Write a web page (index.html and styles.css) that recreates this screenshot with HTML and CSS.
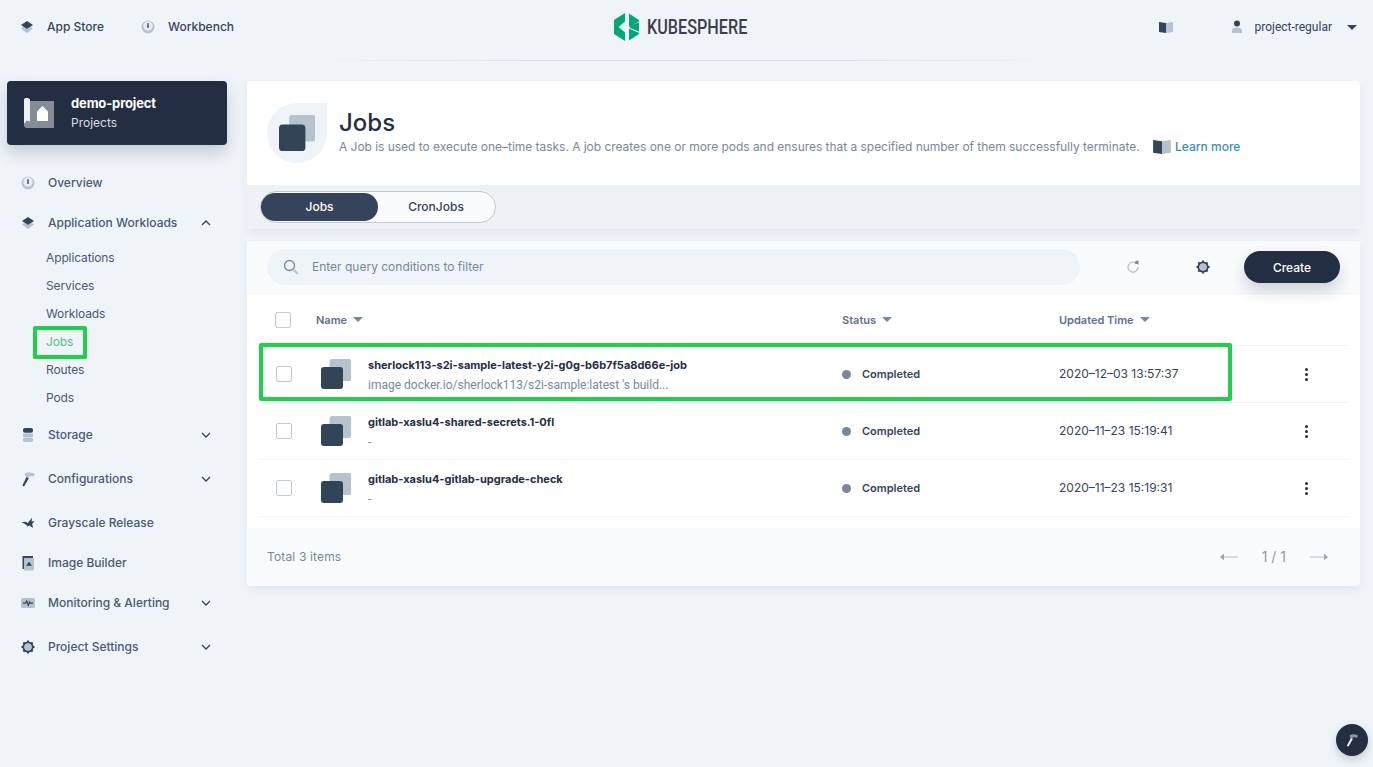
FILE: index.html
```html
<!DOCTYPE html>
<html lang="en" dir="ltr">

<head>
  <meta charset="utf-8">
  <meta name="viewport" content="width=device-width, initial-scale=1.0">
  <title>Jobs - KubeSphere</title>
  <link rel="stylesheet" href="styles.css">
</head>

<body>
  <svg class="sprite" aria-hidden="true">
    <symbol id="i-layers" viewBox="0 0 16 16">
      <path fill="#b6c2cd" d="M2 9.500 4.200 8 8 10.200 11.800 8 14 9.500 8 14z"/>
      <path fill="#36435c" d="M8 2 14 6 8 10 2 6z"/>
    </symbol>
    <symbol id="i-dial" viewBox="0 0 16 16">
      <circle cx="8" cy="8" r="6.500" fill="#b6c2cd"/>
      <circle cx="8" cy="7" r="4.700" fill="#e6ecf2"/>
      <path fill="#36435c" d="M7.500 4h1l.4 4.800H7.100z"/>
    </symbol>
    <symbol id="i-db" viewBox="0 0 16 16">
      <rect x="3" y="1" width="10" height="4.800" rx="2" fill="#36435c"/>
      <rect x="3" y="6.400" width="10" height="3.600" fill="#b6c2cd"/>
      <rect x="3" y="10.400" width="10" height="4.600" rx="2" fill="#b6c2cd"/>
    </symbol>
    <symbol id="i-hammer" viewBox="0 0 16 16">
      <path fill="#b6c2cd" d="M4.500 3C7.500 1 11.500 1.200 15 3l-1.200 2.800C12 4.800 10.500 4.800 9.200 5.600L8 7.200 5.800 5.800z"/>
      <path fill="#36435c" d="M6.500 6 8.800 7.300 4.400 15c-.5.700-2.100-.1-1.800-1z"/>
    </symbol>
    <symbol id="i-bird" viewBox="0 0 16 16">
      <path fill="#36435c" d="M1.500 7.200 6 6.800 7.500 8.300 12 2.800l-.4 3.700L14.500 6l-2.300 3 .8 4-3.500-2.500-2 1L6 9.500z"/>
    </symbol>
    <symbol id="i-builder" viewBox="0 0 16 16">
      <path fill="#36435c" d="M2.500 1h10.500v2H4.500v11h-2z"/>
      <rect x="4" y="3" width="10" height="12.500" rx="1" fill="#b6c2cd"/>
      <path fill="#36435c" d="M9 6.800 12 10.800H6z"/>
    </symbol>
    <symbol id="i-pulse" viewBox="0 0 16 16">
      <rect x="1" y="3" width="14" height="10" rx="1.500" fill="#b6c2cd"/>
      <path fill="none" stroke="#36435c" stroke-width="1.200" d="M3 8.200h2.500L6.800 6l1.500 4.200L9.600 7l.8 1.200H13"/>
    </symbol>
    <symbol id="i-gear" viewBox="0 0 16 16">
      <circle cx="8" cy="8" r="4.600" fill="none" stroke="#36435c" stroke-width="2"/>
      <circle cx="8" cy="8" r="3.600" fill="#b6c2cd"/>
      <path stroke="#36435c" stroke-width="2" d="M8 1.500v2.200M8 12.300v2.200M1.500 8h2.200M12.300 8h2.200M3.400 3.400l1.600 1.600M11 11l1.600 1.600M3.400 12.600 5 11M11 5l1.600-1.600"/>
    </symbol>
    <symbol id="i-book" viewBox="1 2.500 14 11">
      <path fill="#36435c" d="M1 2.500 8 3.500v10l-7-1z"/>
      <path fill="#b6c2cd" d="M8 3.500 15 2.500v10l-7 1z"/>
    </symbol>
    <symbol id="i-job" viewBox="0 0 30 30">
      <rect x="8.500" y="0" width="22" height="22" rx="2.500" fill="#b6c2cd"/>
      <rect x="0" y="8" width="22" height="22" rx="3" fill="#324558"/>
    </symbol>
    <symbol id="i-down" viewBox="0 0 12 12">
      <path fill="none" stroke="#36435c" stroke-width="1.300" d="M2 4l4 4 4-4"/>
    </symbol>
    <symbol id="i-up" viewBox="0 0 12 12">
      <path fill="none" stroke="#36435c" stroke-width="1.300" d="M2 8l4-4 4 4"/>
    </symbol>
  </svg>

  <header class="topbar">
    <nav class="topnav">
      <a class="toplink"><svg class="ico"><use href="#i-layers"/></svg>App Store</a>
      <a class="toplink"><svg class="ico"><use href="#i-dial"/></svg>Workbench</a>
    </nav>
    <div class="logo">
      <svg class="logo-mark" viewBox="0 0 25 28">
        <path fill="#00a971" d="M0 7 11 0v8.500L4.500 14 11 19.500V28L0 21z"/>
        <path fill="#00a971" d="M15 .500 25 7v1.500L15 14zM15 15.500 25 20v1L15 27.500z"/>
        <path fill="#00a971" d="M16 12 25 9.500v9L16 15z"/>
      </svg>
      <span class="logo-text"><span>KUBESPHERE</span></span>
    </div>
    <div class="topright">
      <svg class="ico-guide"><use href="#i-book"/></svg>
      <a class="user">
        <svg class="ico" viewBox="0 0 16 16">
          <circle cx="8" cy="4.500" r="3" fill="#36435c"/>
          <path fill="#b6c2cd" d="M3 14v-2.500C3 9.500 5 8.500 8 8.500s5 1 5 3V14z"/>
        </svg>
        <span>project-regular</span>
        <i class="caret"></i>
      </a>
    </div>
  </header>

  <div class="page">
    <aside class="sidebar">
      <div class="project">
        <svg class="project-ico" viewBox="0 0 30 30">
          <path fill="#fff" fill-opacity=".45" d="M0 3h30v27H3c-2 0-3-1-3-3z"/>
          <path fill="#eef1f4" d="M0 2c0-1.500 1-2 2.500-2S6 .500 6 2v21.500c-2-1-4-1-4-.500S0 27 0 25z"/>
          <path fill="#fff" d="M13 13.500 18.500 8l5.500 5.500V23H13z"/>
        </svg>
        <div>
          <div class="project-name">demo-project</div>
          <div class="project-type">Projects</div>
        </div>
      </div>
      <ul class="menu">
        <li class="menu-item"><svg class="ico"><use href="#i-dial"/></svg>Overview</li>
        <li class="menu-item"><svg class="ico"><use href="#i-layers"/></svg>Application Workloads<svg class="chev"><use href="#i-up"/></svg></li>
        <li class="submenu">
          <a>Applications</a>
          <a>Services</a>
          <a>Workloads</a>
          <a class="active">Jobs<span class="mark mark-jobs"></span></a>
          <a>Routes</a>
          <a>Pods</a>
        </li>
        <li class="menu-item has-sub"><svg class="ico"><use href="#i-db"/></svg>Storage<svg class="chev"><use href="#i-down"/></svg></li>
        <li class="menu-item has-sub"><svg class="ico"><use href="#i-hammer"/></svg>Configurations<svg class="chev"><use href="#i-down"/></svg></li>
        <li class="menu-item"><svg class="ico"><use href="#i-bird"/></svg>Grayscale Release</li>
        <li class="menu-item"><svg class="ico"><use href="#i-builder"/></svg>Image Builder</li>
        <li class="menu-item has-sub"><svg class="ico"><use href="#i-pulse"/></svg>Monitoring &amp; Alerting<svg class="chev"><use href="#i-down"/></svg></li>
        <li class="menu-item"><svg class="ico"><use href="#i-gear"/></svg>Project Settings<svg class="chev"><use href="#i-down"/></svg></li>
      </ul>
    </aside>

    <main class="content">
      <section class="banner">
        <div class="banner-top">
          <div class="banner-ico"><svg viewBox="0 0 30 30"><use href="#i-job"/></svg></div>
          <div>
            <h1>Jobs</h1>
            <p class="desc">A Job is used to execute one–time tasks. A job creates one or more pods and ensures that a specified number of them successfully terminate.
              <a class="learn"><svg class="ico-book"><use href="#i-book"/></svg>Learn more</a>
            </p>
          </div>
        </div>
        <div class="tabbar">
          <div class="tabs">
            <a class="tab on">Jobs</a>
            <a class="tab">CronJobs</a>
          </div>
        </div>
      </section>

      <section class="panel">
        <div class="toolbar">
          <div class="search">
            <svg class="search-ico" viewBox="0 0 16 16">
              <circle cx="6.500" cy="6.500" r="5" fill="none" stroke="#79879c" stroke-width="1.300"/>
              <path stroke="#b6c2cd" stroke-width="2" d="M10.500 10.500 15 15"/>
            </svg>
            Enter query conditions to filter
          </div>
          <svg class="tool-ico refresh" viewBox="0 0 16 16">
            <path fill="none" stroke="#b6c2cd" stroke-width="1.300" d="M11.500 4.500A5 5 0 1 0 13 8"/>
            <path fill="#79879c" d="M10 2.500l3.500-1v4l-3.500-1z"/>
          </svg>
          <svg class="tool-ico gear"><use href="#i-gear"/></svg>
          <button class="create">Create</button>
        </div>

        <div class="table">
          <div class="row head">
            <span class="check"></span>
            <span>Name<i class="sort"></i></span>
            <span>Status<i class="sort"></i></span>
            <span>Updated Time<i class="sort"></i></span>
            <span></span>
          </div>
          <div class="row item">
            <span class="check"></span>
            <div class="name">
              <svg class="job-ico"><use href="#i-job"/></svg>
              <div class="job-text">
                <div class="job-title">sherlock113-s2i-sample-latest-y2i-g0g-b6b7f5a8d66e-job</div>
                <div class="job-desc">image docker.io/sherlock113/s2i-sample:latest 's build...</div>
              </div>
            </div>
            <span class="status"><i class="dot"></i>Completed</span>
            <span class="time">2020–12–03 13:57:37</span>
            <span class="more"><i></i><i></i><i></i></span>
            <span class="mark mark-row"></span>
          </div>
          <div class="row item">
            <span class="check"></span>
            <div class="name">
              <svg class="job-ico"><use href="#i-job"/></svg>
              <div class="job-text">
                <div class="job-title">gitlab-xaslu4-shared-secrets.1-0fl</div>
                <div class="job-desc">-</div>
              </div>
            </div>
            <span class="status"><i class="dot"></i>Completed</span>
            <span class="time">2020–11–23 15:19:41</span>
            <span class="more"><i></i><i></i><i></i></span>
          </div>
          <div class="row item">
            <span class="check"></span>
            <div class="name">
              <svg class="job-ico"><use href="#i-job"/></svg>
              <div class="job-text">
                <div class="job-title">gitlab-xaslu4-gitlab-upgrade-check</div>
                <div class="job-desc">-</div>
              </div>
            </div>
            <span class="status"><i class="dot"></i>Completed</span>
            <span class="time">2020–11–23 15:19:31</span>
            <span class="more"><i></i><i></i><i></i></span>
          </div>
        </div>

        <div class="pager">
          <span class="total">Total 3 items</span>
          <div class="pages">
            <svg class="arrow" viewBox="0 0 18 8"><path fill="#9aa7b7" d="M0 4l4-3.500v7z"/><rect x="4" y="3.200" width="14" height="1.600" fill="#ccd5de"/></svg>
            <span>1 / 1</span>
            <svg class="arrow" viewBox="0 0 18 8"><rect x="0" y="3.200" width="14" height="1.600" fill="#ccd5de"/><path fill="#9aa7b7" d="M18 4l-4-3.500v7z"/></svg>
          </div>
        </div>
      </section>
    </main>
  </div>

  <a class="fab">
    <svg viewBox="0 0 16 16">
      <path fill="#8a94a3" d="M5.500 3.500C8 1.800 11 2 14 3.500l-1 2.400C11.500 5 10.300 5 9.200 5.600L8 7 6 5.600z"/>
      <path fill="#fff" d="M7 6 8.800 7 4.600 14.200c-.4.600-1.800-.1-1.500-.9z"/>
    </svg>
  </a>
</body>

</html>
```

FILE: styles.css
```css
* {
  box-sizing: border-box;
}

html,
body {
  height: 100%;
}

body {
  margin: 0;
  overflow: hidden;
  background-color: #eff4f9;
  color: #36435c;
  font-family: Inter, Roboto, "Liberation Sans", sans-serif;
  font-size: 12px;
  line-height: 20px;
}

.sprite {
  display: none;
}

.ico {
  width: 16px;
  height: 16px;
  flex: none;
}

/* top bar */
.topbar {
  position: relative;
  display: grid;
  grid-template-columns: 1fr auto 1fr;
  align-items: center;
  height: 61px;
  padding: 0 16px 7px 19px;
}

.topbar::after {
  content: "";
  position: absolute;
  left: 300px;
  right: 300px;
  bottom: 0;
  height: 1px;
  background: linear-gradient(90deg, #eff4f9, #dbe1e8 30%, #dbe1e8 70%, #eff4f9);
}

.topnav {
  display: flex;
  gap: 36px;
}

.toplink {
  display: flex;
  align-items: center;
  gap: 12px;
  font-weight: 500;
}

.logo {
  display: flex;
  align-items: center;
  gap: 8px;
  margin-right: 15px;
}

.logo-mark {
  width: 25px;
  height: 28px;
}

.logo-text {
  display: block;
  width: 101px;
  height: 24px;
  color: #413d4d;
  font-family: Roboto, sans-serif;
  font-size: 20px;
  font-weight: 500;
  line-height: 24px;
  white-space: nowrap;
}

.logo-text span {
  display: inline-block;
  transform: scaleX(.81);
  transform-origin: left center;
}

.topright {
  display: flex;
  justify-content: flex-end;
  align-items: center;
  gap: 56px;
}

.ico-guide {
  width: 14px;
  height: 11px;
}

.user {
  display: flex;
  align-items: center;
  gap: 10px;
  font-family: Roboto, sans-serif;
}

.caret {
  width: 0;
  height: 0;
  margin-left: 5px;
  border: 5px solid transparent;
  border-top: 5px solid #36435c;
  border-bottom: 0;
}

/* layout */
.page {
  display: flex;
  padding-top: 20px;
}

.sidebar {
  flex: none;
  width: 247px;
  padding-left: 7px;
}

.project {
  display: flex;
  align-items: center;
  gap: 17px;
  width: 220px;
  height: 64px;
  padding-left: 17px;
  border-radius: 4px;
  background-color: #242e42;
  box-shadow: 0 8px 16px rgba(36, 46, 66, .2);
  color: #fff;
}

.project-ico {
  width: 30px;
  height: 30px;
}

.project-name {
  font-size: 13px;
  font-weight: 700;
  letter-spacing: -.15px;
}

.project-type {
  color: #d8dee5;
}

/* side menu */
.menu {
  width: 205px;
  margin: 18px 0 0;
  padding: 0;
  list-style: none;
}

.menu-item {
  display: flex;
  align-items: center;
  gap: 12px;
  height: 40px;
  padding: 0 0 0 13px;
  font-weight: 500;
  color: #4a5974;
}

.has-sub {
  margin-bottom: 4px;
}

.chev {
  width: 12px;
  height: 12px;
  margin-left: auto;
}

.submenu {
  margin: 1px 0 3px;
}

.submenu a {
  position: relative;
  display: block;
  height: 28px;
  padding-left: 39px;
  letter-spacing: -.12px;
  line-height: 28px;
  color: #4a5974;
}

.submenu a.active {
  color: #55bc8a;
}

/* green marks drawn over the screenshot */
.mark {
  position: absolute;
  border: 4px solid #22cf4a;
  border-radius: 2px;
  pointer-events: none;
}

.mark-jobs {
  left: 26px;
  top: -2px;
  width: 54px;
  height: 33px;
}

.mark-row {
  left: -1px;
  top: -3px;
  width: 973px;
  height: 58px;
}

/* main column */
.content {
  flex: none;
  width: 1113px;
}

.banner {
  border-radius: 4px;
  background-color: #fff;
  box-shadow: 0 4px 8px rgba(36, 46, 66, .06);
}

.banner-top {
  display: flex;
  align-items: center;
  gap: 12px;
  height: 104px;
  padding-left: 20px;
}

.banner-ico {
  display: flex;
  justify-content: center;
  align-items: center;
  width: 60px;
  height: 60px;
  border-radius: 50% 0 50% 50%;
  background-color: #eff4f9;
}

.banner-ico svg {
  width: 36px;
  height: 36px;
}

h1 {
  margin: 0;
  color: #242e42;
  font-size: 24px;
  font-weight: 500;
  line-height: 28px;
}

.desc {
  margin: 0;
  color: #79879c;
  letter-spacing: -.033px;
}

.learn {
  margin-left: 10px;
  color: #3d8fb8;
  font-weight: 500;
  letter-spacing: 0;
}

.ico-book {
  width: 18px;
  height: 14px;
  margin-right: 4px;
  vertical-align: -3px;
}

.tabbar {
  height: 44px;
  padding: 6px 13px;
  background-color: #eef2f6;
}

.tabs {
  display: flex;
  width: 236px;
  height: 32px;
  padding: 1px 1px 1px 0;
  border: 1px solid #c1c9d1;
  border-radius: 16px;
  background-color: #f9fbfd;
}

.tab {
  flex: 1;
  height: 28px;
  border-radius: 14px;
  font-weight: 500;
  line-height: 28px;
  text-align: center;
}

.tab.on {
  flex: none;
  width: 117px;
  background-color: #36435c;
  color: #fff;
}

.panel {
  margin-top: 12px;
  border-radius: 4px;
  background-color: #fff;
  box-shadow: 0 4px 8px rgba(36, 46, 66, .06);
  overflow: hidden;
}

.toolbar {
  display: flex;
  align-items: center;
  height: 53px;
  padding: 0 20px;
  border-bottom: 1px solid #eff4f9;
  background-color: #f9fbfd;
}

.search {
  display: flex;
  align-items: center;
  gap: 13px;
  width: 813px;
  height: 36px;
  padding-left: 16px;
  border-radius: 18px;
  background-color: #eff4f9;
  color: #79879c;
}

.search-ico {
  width: 16px;
  height: 16px;
}

.tool-ico {
  flex: none;
  width: 16px;
  height: 16px;
}

.refresh {
  margin-left: 45px;
}

.gear {
  margin-left: 54px;
}

.create {
  width: 96px;
  height: 32px;
  margin-left: 33px;
  border: 0;
  border-radius: 16px;
  background-color: #242e42;
  box-shadow: 0 8px 16px rgba(36, 46, 66, .2);
  color: #fff;
  font-family: inherit;
  font-size: 12px;
  font-weight: 500;
}

/* table */
.table {
  margin: 0 12px 0 13px;
  padding-bottom: 11px;
}

.row {
  position: relative;
  display: grid;
  grid-template-columns: 56px 526px 217px 1fr 43px;
  align-items: center;
  height: 57px;
  border-bottom: 1px solid #eff4f9;
}

.row.head {
  height: 52px;
  color: #5f708a;
  font-size: 11px;
  font-weight: 600;
}

.check {
  width: 16px;
  height: 16px;
  margin-left: 16px;
  border: 1px solid #c1c9d1;
  border-radius: 2px;
  background-color: #fff;
}

.head .check {
  margin-left: 15px;
}

.sort {
  display: inline-block;
  width: 0;
  height: 0;
  margin-left: 6px;
  vertical-align: 2px;
  border: 5px solid transparent;
  border-top: 5px solid #79879c;
  border-bottom: 0;
}

.name {
  display: flex;
  align-items: center;
  gap: 17px;
  padding-left: 5px;
}

.job-ico {
  flex: none;
  width: 30px;
  height: 30px;
}

.job-text {
  margin-top: 2px;
}

.job-title {
  color: #242e42;
  font-size: 11px;
  font-weight: 700;
}

.job-desc {
  color: #79879c;
  font-family: Roboto, sans-serif;
}

.status {
  display: flex;
  align-items: center;
  gap: 11px;
  font-size: 11px;
  font-weight: 600;
  color: #36435c;
}

.dot {
  width: 9px;
  height: 9px;
  border-radius: 50%;
  background-color: #79879c;
}

.more {
  display: flex;
  flex-direction: column;
  align-items: center;
  gap: 2px;
  width: 3px;
  margin-top: 1px;
}

.more i {
  width: 3px;
  height: 3px;
  border-radius: 50%;
  background-color: #242e42;
}

.pager {
  display: flex;
  justify-content: space-between;
  align-items: center;
  height: 58px;
  padding: 0 32px 0 20px;
  background-color: #f9fbfd;
  color: #79879c;
}

.total {
  letter-spacing: .15px;
}

.pages {
  display: flex;
  align-items: center;
  gap: 24px;
  color: #8f9cae;
  font-size: 14px;
}

.arrow {
  width: 18px;
  height: 8px;
}

.fab {
  position: fixed;
  right: 5px;
  bottom: 11px;
  display: flex;
  justify-content: center;
  align-items: center;
  width: 32px;
  height: 32px;
  border-radius: 50%;
  background-color: #242e42;
  box-shadow: 0 4px 8px rgba(36, 46, 66, .2);
}

.fab svg {
  width: 16px;
  height: 16px;
}
```
